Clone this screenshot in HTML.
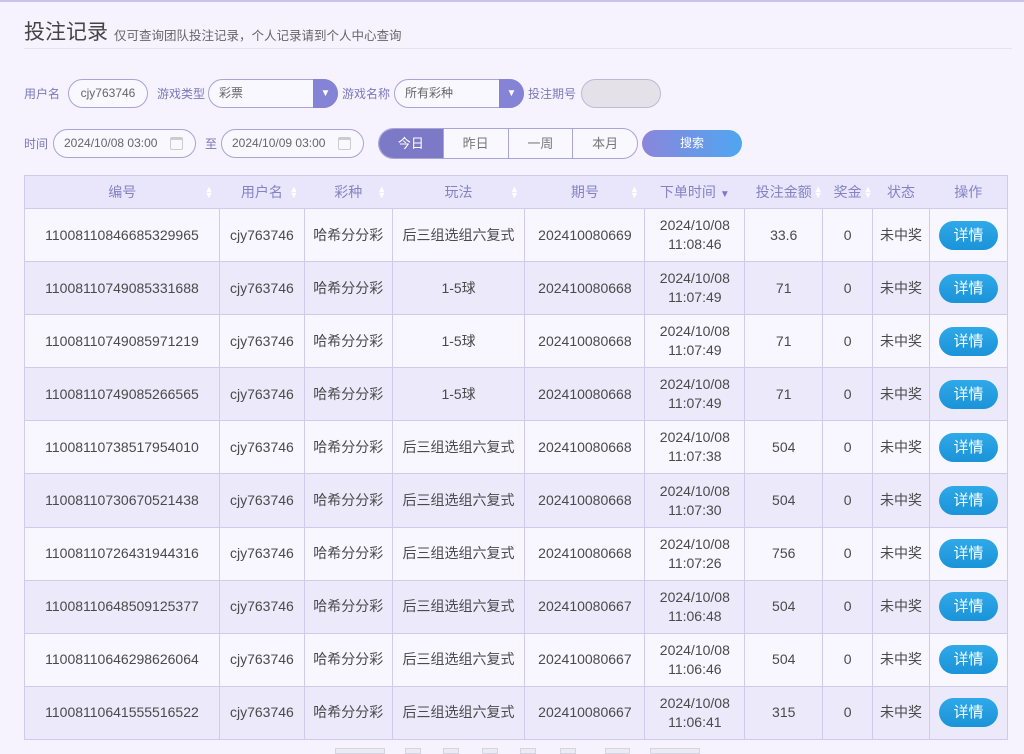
<!DOCTYPE html>
<html><head><meta charset="utf-8"><style>
*{box-sizing:border-box;margin:0;padding:0}
body{width:1024px;height:752px;overflow:hidden;background:#f6f3fe;font-family:"Liberation Sans","Noto Sans CJK SC",sans-serif;color:#444;position:relative}
.topline{position:absolute;left:0;top:0;width:1024px;height:2px;background:#c9c3e8}
.title{position:absolute;left:24px;top:16px;font-size:21px;color:#444}
.sub{position:absolute;left:114px;top:25px;font-size:12.5px;color:#666}
.hr{position:absolute;left:24px;top:48px;width:988px;height:1px;background:#e6e2f3}
.lbl{position:absolute;font-size:12px;color:#7a78b8}
.pill{position:absolute;border:1px solid #a9a4d8;border-radius:15px;background:#f9f8ff;font-size:12px;color:#666;height:29px;line-height:27px}
.sel .arr{position:absolute;right:-1px;top:-1px;width:25px;height:29px;background:#8583d5;border-radius:0 15px 15px 0;color:#fff;font-size:10px;text-align:center;line-height:29px}
.cal{position:absolute;right:12px;top:7px;width:13px;height:13px;border:1px solid #ccc;border-top:3px solid #ccc;border-radius:2px}
.tabs{position:absolute;left:378px;top:128px;width:260px;height:31px;border:1px solid #a9a4d8;border-radius:16px;overflow:hidden;display:flex;background:#f9f8ff}
.tabs div{flex:1;text-align:center;line-height:29px;font-size:13px;color:#777;border-left:1px solid #a9a4d8}
.tabs div:first-child{border-left:none;background:#7c79c7;color:#fff}
.search{position:absolute;left:642px;top:130px;width:100px;height:27px;border-radius:14px;background:linear-gradient(90deg,#8a86dc,#4fa6f0);color:#fff;font-size:12px;text-align:center;line-height:27px}
table{position:absolute;left:24px;top:175px;border-collapse:collapse;width:984px;font-size:14px}
th{height:33px;background:#e9e6fb;color:#8482c4;font-weight:normal;font-size:14px;border-top:1px solid #cfcaee;border-bottom:1px solid #cfcaee;position:relative}
th:first-child{border-left:1px solid #cfcaee}th:last-child{border-right:1px solid #cfcaee}
td{height:53.1px;border:1px solid #cfcaee;text-align:center;color:#4a4a4a;line-height:19px}
tr.a td{background:#f8f6fe}
tr.b td{background:#ebe9fa}
th .s{position:absolute;right:6px;top:10px;color:#fff;font-size:9px;line-height:6px}
.btn{display:inline-block;width:59px;height:29px;border-radius:15px;background:linear-gradient(#2fa9e8,#1a93d8);color:#fff;line-height:29px;font-size:15px}
.pg{position:absolute;top:748px;height:6px;background:#eceaf3;border:1px solid #d6d4e0}
</style></head><body>
<div class="topline"></div>
<div class="title">投注记录</div>
<div class="sub">仅可查询团队投注记录，个人记录请到个人中心查询</div>
<div class="hr"></div>

<div class="lbl" style="left:24px;top:85px">用户名</div>
<div class="pill" style="left:68px;top:79px;width:80px;text-align:center;color:#666">cjy763746</div>
<div class="lbl" style="left:157px;top:85px">游戏类型</div>
<div class="pill sel" style="left:208px;top:79px;width:130px;padding-left:10px">彩票<div class="arr">▼</div></div>
<div class="lbl" style="left:342px;top:85px">游戏名称</div>
<div class="pill sel" style="left:394px;top:79px;width:130px;padding-left:10px">所有彩种<div class="arr">▼</div></div>
<div class="lbl" style="left:528px;top:85px">投注期号</div>
<div class="pill" style="left:581px;top:79px;width:80px;background:#e4e2e8;border-color:#bdb9d8"></div>

<div class="lbl" style="left:24px;top:135px">时间</div>
<div class="pill" style="left:53px;top:129px;width:143px;padding-left:10px">2024/10/08 03:00<div class="cal"></div></div>
<div class="lbl" style="left:205px;top:135px">至</div>
<div class="pill" style="left:221px;top:129px;width:143px;padding-left:10px">2024/10/09 03:00<div class="cal"></div></div>
<div class="tabs"><div>今日</div><div>昨日</div><div>一周</div><div>本月</div></div>
<div class="search">搜索</div>

<table>
<colgroup><col style="width:195px"><col style="width:85px"><col style="width:88px"><col style="width:133px"><col style="width:120px"><col style="width:100px"><col style="width:78px"><col style="width:50px"><col style="width:57px"><col style="width:78px"></colgroup>
<tr><th>编号<span class="s">▲<br>▼</span></th><th>用户名<span class="s">▲<br>▼</span></th><th>彩种<span class="s">▲<br>▼</span></th><th>玩法<span class="s">▲<br>▼</span></th><th>期号<span class="s">▲<br>▼</span></th><th>下单时间 <span style="color:#7c79c7;font-size:10px">▼</span></th><th>投注金额<span class="s" style="right:0">▲<br>▼</span></th><th>奖金<span class="s" style="right:0">▲<br>▼</span></th><th>状态</th><th>操作</th></tr>
<tr class="a"><td>11008110846685329965</td><td>cjy763746</td><td>哈希分分彩</td><td>后三组选组六复式</td><td>202410080669</td><td>2024/10/08<br>11:08:46</td><td>33.6</td><td>0</td><td>未中奖</td><td><span class="btn">详情</span></td></tr>
<tr class="b"><td>11008110749085331688</td><td>cjy763746</td><td>哈希分分彩</td><td>1-5球</td><td>202410080668</td><td>2024/10/08<br>11:07:49</td><td>71</td><td>0</td><td>未中奖</td><td><span class="btn">详情</span></td></tr>
<tr class="a"><td>11008110749085971219</td><td>cjy763746</td><td>哈希分分彩</td><td>1-5球</td><td>202410080668</td><td>2024/10/08<br>11:07:49</td><td>71</td><td>0</td><td>未中奖</td><td><span class="btn">详情</span></td></tr>
<tr class="b"><td>11008110749085266565</td><td>cjy763746</td><td>哈希分分彩</td><td>1-5球</td><td>202410080668</td><td>2024/10/08<br>11:07:49</td><td>71</td><td>0</td><td>未中奖</td><td><span class="btn">详情</span></td></tr>
<tr class="a"><td>11008110738517954010</td><td>cjy763746</td><td>哈希分分彩</td><td>后三组选组六复式</td><td>202410080668</td><td>2024/10/08<br>11:07:38</td><td>504</td><td>0</td><td>未中奖</td><td><span class="btn">详情</span></td></tr>
<tr class="b"><td>11008110730670521438</td><td>cjy763746</td><td>哈希分分彩</td><td>后三组选组六复式</td><td>202410080668</td><td>2024/10/08<br>11:07:30</td><td>504</td><td>0</td><td>未中奖</td><td><span class="btn">详情</span></td></tr>
<tr class="a"><td>11008110726431944316</td><td>cjy763746</td><td>哈希分分彩</td><td>后三组选组六复式</td><td>202410080668</td><td>2024/10/08<br>11:07:26</td><td>756</td><td>0</td><td>未中奖</td><td><span class="btn">详情</span></td></tr>
<tr class="b"><td>11008110648509125377</td><td>cjy763746</td><td>哈希分分彩</td><td>后三组选组六复式</td><td>202410080667</td><td>2024/10/08<br>11:06:48</td><td>504</td><td>0</td><td>未中奖</td><td><span class="btn">详情</span></td></tr>
<tr class="a"><td>11008110646298626064</td><td>cjy763746</td><td>哈希分分彩</td><td>后三组选组六复式</td><td>202410080667</td><td>2024/10/08<br>11:06:46</td><td>504</td><td>0</td><td>未中奖</td><td><span class="btn">详情</span></td></tr>
<tr class="b"><td>11008110641555516522</td><td>cjy763746</td><td>哈希分分彩</td><td>后三组选组六复式</td><td>202410080667</td><td>2024/10/08<br>11:06:41</td><td>315</td><td>0</td><td>未中奖</td><td><span class="btn">详情</span></td></tr>
</table>
<div class="pg" style="left:335px;width:50px"></div>
<div class="pg" style="left:405px;width:16px"></div>
<div class="pg" style="left:443px;width:16px"></div>
<div class="pg" style="left:482px;width:16px"></div>
<div class="pg" style="left:520px;width:16px"></div>
<div class="pg" style="left:560px;width:16px"></div>
<div class="pg" style="left:605px;width:25px"></div>
<div class="pg" style="left:650px;width:50px"></div>
</body></html>
